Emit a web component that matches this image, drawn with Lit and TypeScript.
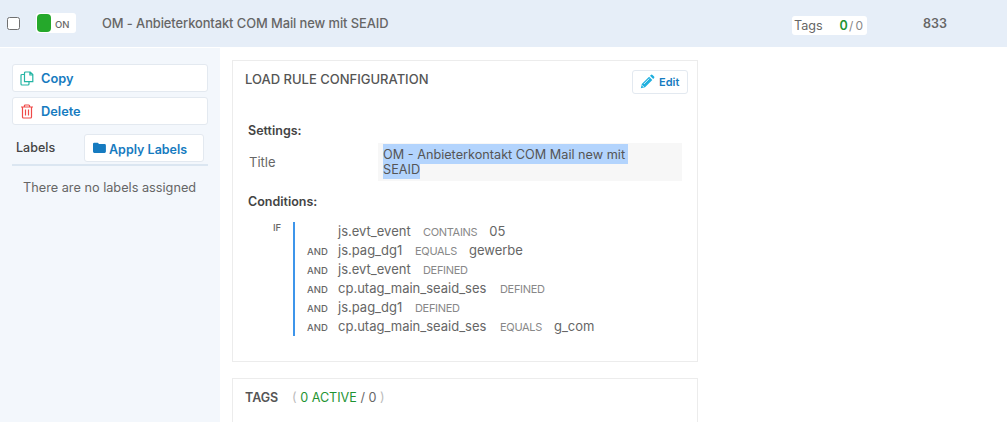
import { LitElement, html, css, nothing } from "lit";
import { customElement } from "lit/decorators.js";

interface Condition {
  variable: string;
  operator: string;
  value?: string;
  size: string;
}

const conditions: Condition[] = [
  { variable: "js.evt_event", operator: "CONTAINS", value: "05", size: "evt" },
  { variable: "js.pag_dg1", operator: "EQUALS", value: "gewerbe", size: "pag" },
  { variable: "js.evt_event", operator: "DEFINED", size: "evt" },
  { variable: "cp.utag_main_seaid_ses", operator: "DEFINED", size: "utag" },
  { variable: "js.pag_dg1", operator: "DEFINED", size: "pag" },
  { variable: "cp.utag_main_seaid_ses", operator: "EQUALS", value: "g_com", size: "utag" },
];

@customElement("app-root")
export class AppRoot extends LitElement {
  static styles = css`
    :host {
      display: block;
      width: 1007px;
      height: 422px;
      overflow: hidden;
      background: #fff;
      font-family: Inter, "Liberation Sans", sans-serif;
      font-size: 13px;
      color: #666;
      white-space: nowrap;
    }
    * { box-sizing: border-box; }
    .bar {
      display: flex;
      height: 47px;
      background: #e6eef8;
      line-height: 16px;
    }
    .check {
      width: 13px;
      height: 13px;
      margin: 17px 16px 0 7px;
      border: 1px solid #707070;
      border-radius: 2.5px;
      background: #fff;
    }
    .toggle {
      display: flex;
      width: 40px;
      height: 20px;
      margin-top: 13px;
      padding: 1px;
      border-radius: 3px;
      background: #fff;
      font-size: 9.5px;
      font-weight: 500;
      line-height: 22px;
    }
    .knob { width: 14px; height: 18px; margin-right: 4px; border-radius: 4px; background: #25a82b; }
    .name { width: 690px; margin: 16px 0 0 26px; font-weight: 500; font-size: 12.9px; letter-spacing: -.08px; }
    .count {
      display: flex;
      width: 75px;
      height: 19px;
      margin-top: 16px;
      padding: 0 2px;
      border-radius: 3px;
      background: #fff;
      line-height: 20px;
    }
    .count .word { width: 47px; font-size: 12.6px; }
    .green { color: #1e9432; }
    .count .green { font-weight: 600; width: 10px; font-size: 12.5px; }
    .count .rest { color: #888; font-size: 12px; letter-spacing: 2px; }
    .id { margin: 16px 0 0 56px; font-weight: 600; font-size: 12.5px; }
    .body { display: flex; }
    .side {
      width: 220px;
      height: 374px;
      margin-top: 1px;
      padding: 16px 12px 0;
      background: #f3f7fc;
    }
    .btn {
      display: flex;
      align-items: center;
      border: 1px solid #e3e9f0;
      border-radius: 3px;
      background: #fff;
      color: #167bc0;
      font-weight: 600;
    }
    .wide { height: 28px; margin-bottom: 5px; padding: 1px 0 0 7px; font-size: 12.8px; }
    .wide svg { margin: -1px 7px 0 0; }
    .labels {
      display: flex;
      height: 32px;
      margin-top: 9px;
      border-bottom: 2px solid #dbe6f1;
    }
    .labels .word { width: 72px; padding-left: 4px; line-height: 28px; color: #444; font-weight: 500; font-size: 12.5px; }
    .apply { width: 120px; height: 28px; padding: 3px 0 0 8px; font-size: 12.5px; }
    .apply svg { margin: -3px 3px 0 0; }
    .none { padding-left: 11px; margin-top: 13px; line-height: 18px; font-size: 12.73px; }
    .main { width: 466px; margin: 13px 0 0 12px; }
    .card { border: 1px solid #ececec; }
    .rule { height: 302px; padding: 9px 9px 0 12px; }
    .head { display: flex; justify-content: space-between; height: 52px; line-height: 19px; color: #555; font-weight: 500; font-size: 13px; }
    .edit { width: 56px; height: 24px; padding-left: 7px; font-size: 11px; }
    .edit svg { margin: -1px 4px 0 0; }
    .section { padding-left: 3px; height: 18px; line-height: 18px; color: #444; font-weight: 600; font-size: 12.5px; }
    .setting { display: flex; margin: 3px 0 11px 4px; }
    .setting .word { width: 129px; line-height: 39px; }
    .field {
      display: flex;
      flex-direction: column;
      align-items: flex-start;
      width: 304px;
      height: 38px;
      padding: 1px 0 0 5px;
      background: #f7f7f7;
      color: #555;
      font-size: 12.7px;
    }
    .field mark { height: 20px; line-height: 22px; padding-right: 3px; background: #b3d4fd; color: inherit; }
    .field .second { height: 15px; line-height: 12px; padding-right: 0; }
    .logic { display: flex; margin: 11px 0 0 28px; height: 114px; }
    .if { width: 20px; font-size: 9.5px; line-height: 11px; font-weight: 500; }
    .rows { border-left: 2px solid #3e95ea; padding-left: 12px; }
    .row { display: flex; align-items: baseline; height: 19px; line-height: 18px; }
    .and { width: 31px; font-size: 9.5px; font-weight: 500; }
    .evt { width: 85px; }
    .pag { width: 77px; }
    .utag { width: 162px; }
    .op { font-size: 11px; letter-spacing: -.32px; color: #888; margin-right: 12px; }
    .tags { display: flex; height: 60px; margin-top: 16px; padding: 9px 12px; line-height: 20px; }
    .tags .word { width: 47px; color: #555; font-weight: 600; font-size: 12.5px; }
    .total { font-size: 12.6px; }
    .paren { color: #bbb; }
  `;

  render() {
    return html`
      <div class="bar">
        <div class="check"></div>
        <div class="toggle"><span class="knob"></span>ON</div>
        <div class="name">OM - Anbieterkontakt COM Mail new mit SEAID</div>
        <div class="count"><span class="word">Tags</span><span class="green">0</span><span class="rest">/0</span></div>
        <div class="id">833</div>
      </div>
      <div class="body">
        <div class="side">
          <div class="btn wide">
            <svg width="14" height="15" viewBox="0 0 14 15" fill="none" stroke="#24b5a4" stroke-width="1.2">
              <path d="M5.5 1h4.7l2.6 2.6v7H4.5V2a1 1 0 0 1 1-1zM9.9 1v3h2.9M4.2 3.5H2a1 1 0 0 0-1 1V13a1 1 0 0 0 1 1h6a1 1 0 0 0 1-1v-2"/>
            </svg>Copy
          </div>
          <div class="btn wide">
            <svg width="14" height="15" viewBox="0 0 14 15" fill="none" stroke="#ef4a48" stroke-width="1.2">
              <path d="M1 3h12M4.400 3V1.900q0-.9.9-.9h3.400q.9 0 .9.900V3M2.500 3v10q0 1 1 1h7q1 0 1-1V3M5.500 5.500v6M8.500 5.500v6"/>
            </svg>Delete
          </div>
          <div class="labels">
            <span class="word">Labels</span>
            <div class="btn apply">
              <svg width="13" height="12" viewBox="0 0 13 12" fill="#167bc0">
                <path d="M0 2Q0 .8 1.200.8h3.300q1.200 0 1.200 1.300h5.900q1.300 0 1.300 1.300v6.200q0 1.300-1.300 1.300H1.300Q0 10.900 0 9.600z"/>
              </svg>Apply Labels
            </div>
          </div>
          <div class="none">There are no labels assigned</div>
        </div>
        <div class="main">
          <div class="card rule">
            <div class="head">
              <span>LOAD RULE CONFIGURATION</span>
              <div class="btn edit">
                <svg width="15" height="15" viewBox="0 0 15 15">
                  <path d="M.8 14.200l1-4.200L9.100 2.700l3.200 3.200L5 13.200zM10 1.800l.9-.9q.8-.7 1.600 0l1.600 1.600q.7.8 0 1.600l-.9.900z" fill="#20b0df"/>
                  <path d="M3.900 10L9.200 4.700M2 11.200l1.800 1.800" stroke="#fff" stroke-width=".8"/>
                </svg>Edit
              </div>
            </div>
            <div class="section">Settings:</div>
            <div class="setting">
              <span class="word">Title</span>
              <div class="field"><mark>OM - Anbieterkontakt COM Mail new mit</mark><mark class="second">SEAID</mark></div>
            </div>
            <div class="section">Conditions:</div>
            <div class="logic">
              <span class="if">IF</span>
              <div class="rows">
                ${conditions.map((c, i) => html`
                  <div class="row">
                    <span class="and">${i ? "AND" : nothing}</span>
                    <span class=${c.size}>${c.variable}</span>
                    <span class="op">${c.operator}</span>
                    <span>${c.value ?? nothing}</span>
                  </div>`)}
              </div>
            </div>
          </div>
          <div class="card tags">
            <span class="word">TAGS</span>
            <span class="total"><span class="paren">(</span> <span class="green">0 ACTIVE</span> / 0 <span class="paren">)</span></span>
          </div>
        </div>
      </div>
    `;
  }
}
